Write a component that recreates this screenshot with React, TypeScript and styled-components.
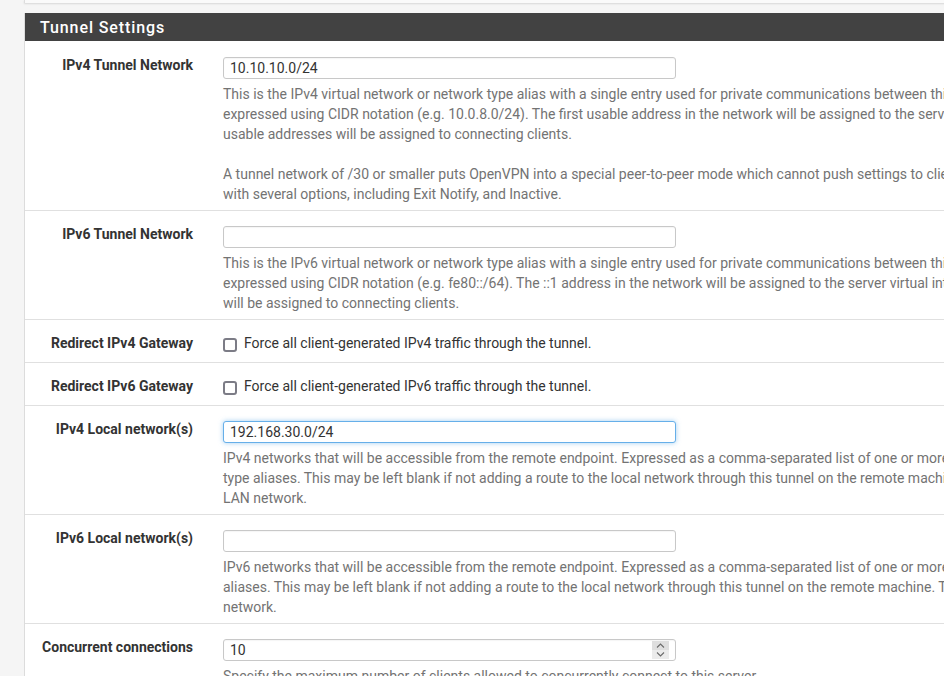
import React from "react";
import styled, { createGlobalStyle } from "styled-components";

const Global = createGlobalStyle`
  html, body { margin: 0; padding: 0; background: #f5f5f5; overflow: hidden; }
  body { font-family: Roboto, "Liberation Sans", Arial, sans-serif; font-size: 14px; color: #212121; }
`;

const Page = styled.div`
  width: 1300px;
  padding-left: 24px;
`;

const PrevPanel = styled.div`
  height: 3px;
  background: #fafafa;
  border-left: 1px solid #ddd;
  box-shadow: 0 1px 2px rgba(0, 0, 0, 0.12);
  margin-bottom: 10px;
`;

const Panel = styled.section`
  background: #fff;
  border-left: 1px solid #dcdcdc;
`;

const Heading = styled.h2`
  margin: 0;
  height: 28px;
  overflow: hidden;
  background: #424242;
  color: #fff;
  font-size: 16px;
  font-weight: 500;
  letter-spacing: 0.9px;
  line-height: 29px;
  padding-left: 15px;
`;

const Row = styled.div<{ $first?: boolean }>`
  display: grid;
  grid-template-columns: 168px 1fr;
  column-gap: 30px;
  padding: 13px 0 6px;
  border-top: 1px solid ${(p) => (p.$first ? "#fff" : "#e0e0e0")};
`;

const Label = styled.label`
  text-align: right;
  font-weight: 700;
  color: #333;
  line-height: 20px;
  white-space: nowrap;
`;

const Field = styled.div`
  min-width: 0;
`;

const InputBox = styled.div`
  position: relative;
  width: 453px;
  margin-top: 2px;
`;

const Input = styled.input<{ $focus?: boolean }>`
  box-sizing: border-box;
  display: block;
  width: 453px;
  height: 22px;
  padding: 0 6px;
  font-family: Roboto, "Liberation Sans", Arial, sans-serif;
  font-size: 14px;
  color: #333;
  border: 1px solid ${(p) => (p.$focus ? "#66afe9" : "#c8c8c8")};
  border-radius: 3px;
  outline: none;
  background: #fff;
  box-shadow: ${(p) =>
    p.$focus ? "0 0 5px rgba(102,175,233,0.6)" : "inset 0 1px 1px rgba(0,0,0,0.04)"};
  -moz-appearance: textfield;
  &::-webkit-inner-spin-button, &::-webkit-outer-spin-button { -webkit-appearance: none; margin: 0; }
`;

const Spinner = styled.span`
  position: absolute;
  right: 7px;
  top: 2px;
  width: 17px;
  height: 18px;
  display: flex;
  flex-direction: column;
`;

const SpinHalf = styled.span<{ $up?: boolean }>`
  flex: 1;
  display: flex;
  align-items: center;
  justify-content: center;
  background: ${(p) => (p.$up ? "#dedede" : "#ebebeb")};
`;

const Help = styled.div`
  margin-top: 5px;
  color: #737373;
  line-height: 20px;
  white-space: nowrap;
`;

const Gap = styled.div`
  height: 20px;
`;

const CheckLine = styled.label`
  display: flex;
  align-items: center;
  gap: 7px;
  line-height: 20px;
  color: #333;
  padding-bottom: 3px;
  white-space: nowrap;
`;

const Box = styled.span`
  box-sizing: border-box;
  width: 14px;
  height: 14px;
  margin-left: 0;
  margin-top: 4px;
  border: 2px solid #7c7c86;
  border-radius: 3px;
  background: #fff;
`;

const Chev = ({ up }: { up?: boolean }) => (
  <svg width="9" height="5" viewBox="0 0 9 5">
    <path
      d={up ? "M1 4.5 L4.5 1 L8 4.5" : "M1 0.5 L4.5 4 L8 0.5"}
      fill="none"
      stroke="#6a6a6a"
      strokeWidth="1.1"
    />
  </svg>
);

export default function App() {
  return (
    <>
      <Global />
      <Page>
        <PrevPanel />
        <Panel>
          <Heading>Tunnel Settings</Heading>

          <Row $first>
            <Label>IPv4 Tunnel Network</Label>
            <Field>
              <InputBox>
                <Input defaultValue="10.10.10.0/24" />
              </InputBox>
              <Help>
                This is the IPv4 virtual network or network type alias with a single entry used for private communications between this server and client hosts
                <br />
                expressed using CIDR notation (e.g. 10.0.8.0/24). The first usable address in the network will be assigned to the server virtual interface. The remaining
                <br />
                usable addresses will be assigned to connecting clients.
                <Gap />
                A tunnel network of /30 or smaller puts OpenVPN into a special peer-to-peer mode which cannot push settings to clients. This mode is not compatible
                <br />
                with several options, including Exit Notify, and Inactive.
              </Help>
            </Field>
          </Row>

          <Row>
            <Label>IPv6 Tunnel Network</Label>
            <Field>
              <InputBox>
                <Input defaultValue="" />
              </InputBox>
              <Help>
                This is the IPv6 virtual network or network type alias with a single entry used for private communications between this server and client hosts
                <br />
                expressed using CIDR notation (e.g. fe80::/64). The ::1 address in the network will be assigned to the server virtual interface. The remaining addresses
                <br />
                will be assigned to connecting clients.
              </Help>
            </Field>
          </Row>

          <Row>
            <Label>Redirect IPv4 Gateway</Label>
            <Field>
              <CheckLine>
                <Box />
                Force all client-generated IPv4 traffic through the tunnel.
              </CheckLine>
            </Field>
          </Row>

          <Row>
            <Label>Redirect IPv6 Gateway</Label>
            <Field>
              <CheckLine>
                <Box />
                Force all client-generated IPv6 traffic through the tunnel.
              </CheckLine>
            </Field>
          </Row>

          <Row>
            <Label>IPv4 Local network(s)</Label>
            <Field>
              <InputBox>
                <Input $focus defaultValue="192.168.30.0/24" />
              </InputBox>
              <Help>
                IPv4 networks that will be accessible from the remote endpoint. Expressed as a comma-separated list of one or more CIDR ranges or host/network
                <br />
                type aliases. This may be left blank if not adding a route to the local network through this tunnel on the remote machine. This is generally set to the
                <br />
                LAN network.
              </Help>
            </Field>
          </Row>

          <Row>
            <Label>IPv6 Local network(s)</Label>
            <Field>
              <InputBox>
                <Input defaultValue="" />
              </InputBox>
              <Help>
                IPv6 networks that will be accessible from the remote endpoint. Expressed as a comma-separated list of one or more IP/PREFIX or host/network type
                <br />
                aliases. This may be left blank if not adding a route to the local network through this tunnel on the remote machine. This is generally set to the LAN
                <br />
                network.
              </Help>
            </Field>
          </Row>

          <Row>
            <Label>Concurrent connections</Label>
            <Field>
              <InputBox>
                <Input type="number" defaultValue="10" />
                <Spinner>
                  <SpinHalf $up>
                    <Chev up />
                  </SpinHalf>
                  <SpinHalf>
                    <Chev />
                  </SpinHalf>
                </Spinner>
              </InputBox>
              <Help>Specify the maximum number of clients allowed to concurrently connect to this server.</Help>
            </Field>
          </Row>
        </Panel>
      </Page>
    </>
  );
}
